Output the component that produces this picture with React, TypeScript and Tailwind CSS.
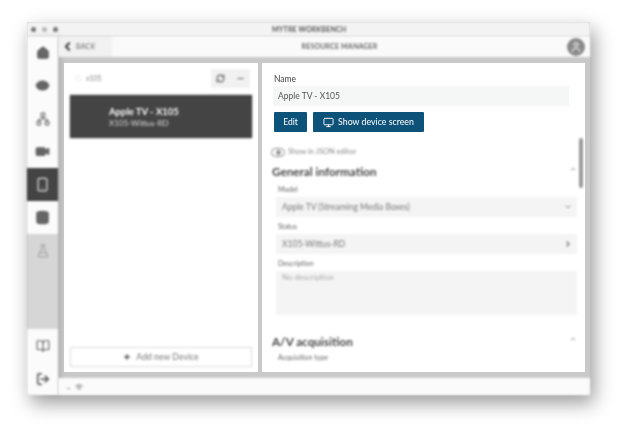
import { Home, Eye, Network, Video, Smartphone, Database, FlaskConical, BookOpen, LogOut, ChevronLeft, ChevronDown, ChevronUp, ChevronRight, RefreshCw, Minus, Plus, Monitor, Search, Wifi, User } from "lucide-react";
import type { ReactNode } from "react";

function NavItem({ children, active, muted }: { children: ReactNode; active?: boolean; muted?: boolean }) {
  return (
    <div
      className={
        "flex h-[33px] items-center justify-center " +
        (active ? "bg-[#444444] text-[#dddddd]" : muted ? "text-[#a5a5a5]" : "bg-[#fbfbfb] text-[#666666]")
      }
    >
      {children}
    </div>
  );
}

function Field({ label, value, chevron }: { label: string; value: string; chevron: ReactNode }) {
  return (
    <div className="mt-[3px] blur-[1px]">
      <p className="pl-[2px] text-[7px] leading-[13px] text-[#666666]">{label}</p>
      <div className="mt-[1px] flex h-[20px] items-center justify-between bg-[#f4f4f4] pl-[6px] pr-[5px] text-[8.5px] text-[#777777]">
        <span>{value}</span>
        {chevron}
      </div>
    </div>
  );
}

export default function App() {
  return (
    <div className="h-[424px] w-[623px] overflow-hidden bg-white pl-[27px] pt-[22px] font-['Lato',sans-serif]">
      <div className="flex h-[373px] w-[563px] flex-col bg-[#c9c9c9] shadow-[4px_8px_18px_rgba(0,0,0,0.4)]">
        <div className="relative flex h-[14px] shrink-0 items-center bg-[#f3f3f3] pl-[4px] blur-[1px]">
          <div className="flex gap-[6px]">
            <span className="h-[5px] w-[5px] rounded-full bg-[#777777]" />
            <span className="h-[5px] w-[5px] rounded-full bg-[#b5b5b5]" />
            <span className="h-[5px] w-[5px] rounded-full bg-[#777777]" />
          </div>
          <span className="ml-[214px] text-[7px] font-bold tracking-wide text-[#555555]">MYTRE WORKBENCH</span>
        </div>
        <div className="flex min-h-0 flex-1">
          <aside className="flex w-[31px] shrink-0 flex-col bg-[#d6d6d6] shadow-[3px_0_4px_rgba(0,0,0,0.12)] blur-[1.3px]">
            <NavItem><Home size={14} fill="currentColor" /></NavItem>
            <NavItem><Eye size={15} fill="currentColor" /></NavItem>
            <NavItem><Network size={14} /></NavItem>
            <NavItem><Video size={15} fill="currentColor" /></NavItem>
            <NavItem active><Smartphone size={15} /></NavItem>
            <NavItem><Database size={15} fill="currentColor" /></NavItem>
            <NavItem muted><FlaskConical size={14} /></NavItem>
            <div className="flex-1" />
            <NavItem><BookOpen size={14} /></NavItem>
            <NavItem><LogOut size={14} strokeWidth={3} /></NavItem>
          </aside>
          <div className="flex min-w-0 flex-1 flex-col">
            <header className="flex h-[21px] shrink-0 items-center justify-between bg-[#fafafa] blur-[1px]">
              <div className="flex h-full w-[54px] items-center bg-[#f1f1f1] pl-[3px]">
                <ChevronLeft size={13} strokeWidth={4} className="text-[#444444]" />
                <span className="ml-[2px] text-[7px] font-bold tracking-wide text-[#888888]">BACK</span>
              </div>
              <span className="text-[7px] font-bold tracking-wide text-[#666666]">RESOURCE MANAGER</span>
              <div className="mr-[5px] flex h-[18px] w-[18px] items-center justify-center rounded-full bg-[#8a8a8a]">
                <User size={12} className="text-white" />
              </div>
            </header>
            <div className="flex min-h-0 flex-1 gap-[4px] pl-[6px] pr-[5px] pt-[6px]">
              <section className="flex w-[194px] shrink-0 flex-col bg-white px-[6px] pb-[5px] pt-[6px]">
                <div className="flex h-[19px] shrink-0 items-center justify-between blur-[1px]">
                  <div className="flex items-center gap-[4px] pl-[5px] text-[7px] text-[#888888]">
                    <Search size={7} className="text-[#e2e2e2]" />
                    <span>x105</span>
                  </div>
                  <div className="mr-[2px] flex h-[19px] w-[39px] items-center justify-around bg-[#f1f1f1] text-[#666666]">
                    <RefreshCw size={9} strokeWidth={3} />
                    <Minus size={9} strokeWidth={3} />
                  </div>
                </div>
                <div className="mt-[7px] flex h-[43px] flex-col justify-center bg-[#444444] pl-[39px] text-white shadow-[0_0_2px_rgba(0,0,0,0.4)] blur-[1px]">
                  <p className="text-[9.5px] font-bold leading-[13px]">Apple TV - X105</p>
                  <p className="text-[8px] leading-[10px] text-[#dddddd]">X105-Wittus-RD</p>
                </div>
                <div className="flex-1" />
                <button type="button" className="flex h-[20px] items-center justify-center gap-[5px] border border-[#dddddd] bg-white text-[8.7px] text-[#777777] blur-[1px]">
                  <Plus size={8} strokeWidth={4} className="text-[#555555]" />
                  Add new Device
                </button>
              </section>
              <section className="relative min-w-0 flex-1 overflow-hidden bg-white pl-[9px] pr-[7px] pt-[10px]">
                <div className="blur-[0.4px]">
                  <p className="pl-[3px] text-[8.5px] leading-[13px] text-[#444444]">Name</p>
                  <div className="ml-[2px] mr-[9px] flex h-[20px] items-center bg-[#f5f6f6] pl-[5px] text-[8.5px] text-[#555555]">Apple TV - X105</div>
                  <div className="ml-[3px] mt-[6px] flex gap-[6px]">
                    <button type="button" className="h-[20px] w-[33px] rounded-[1px] bg-[#0d5278] text-[8.5px] text-white">Edit</button>
                    <button type="button" className="flex h-[20px] w-[111px] items-center justify-center gap-[4px] rounded-[1px] bg-[#0d5278] text-[8.8px] text-white">
                      <Monitor size={11} />
                      Show device screen
                    </button>
                  </div>
                </div>
                <div className="mt-[12px] flex h-[16px] items-center gap-[3px] blur-[1px]">
                  <span className="flex h-[9px] w-[14px] items-center rounded-full border border-[#888888] pl-[4px]">
                    <span className="h-[5px] w-[5px] rounded-full bg-[#999999]" />
                  </span>
                  <span className="text-[7.5px] text-[#888888]">Show in JSON editor</span>
                </div>
                <div className="mt-[3px] flex items-center justify-between pl-[1px] pr-[1px] blur-[1px]">
                  <h3 className="text-[11.7px] font-bold leading-[16px] text-[#444444]">General information</h3>
                  <ChevronUp size={8} strokeWidth={3} className="-mt-[4px] text-[#999999]" />
                </div>
                <div className="ml-[5px] mr-[1px] pt-[1px]">
                  <Field label="Model" value="Apple TV (Streaming Media Boxes)" chevron={<ChevronDown size={8} strokeWidth={3} className="text-[#888888]" />} />
                  <Field label="Status" value="X105-Wittus-RD" chevron={<ChevronRight size={8} strokeWidth={4} className="text-[#777777]" />} />
                  <div className="mt-[3px] blur-[1px]">
                    <p className="pl-[2px] text-[7px] leading-[13px] text-[#666666]">Description</p>
                    <div className="mt-[1px] h-[44px] bg-[#f4f4f4] pl-[6px] text-[8px] leading-[12px] text-[#aaaaaa]">No description</div>
                  </div>
                </div>
                <div className="mt-[18px] flex items-center justify-between pl-[1px] pr-[1px] blur-[1px]">
                  <h3 className="text-[11.7px] font-bold leading-[16px] text-[#444444]">A/V acquisition</h3>
                  <ChevronUp size={8} strokeWidth={3} className="-mt-[4px] text-[#999999]" />
                </div>
                <p className="mt-[3px] pl-[7px] text-[7px] leading-[10px] text-[#666666] blur-[1px]">Acquisition type</p>
                <div className="absolute right-[2px] top-[75px] h-[50px] w-[4px] rounded-full bg-[#999999] blur-[1px]" />
              </section>
            </div>
            <footer className="mt-[6px] flex h-[17px] shrink-0 items-center gap-[5px] bg-[#fbfbfb] pl-[9px] text-[#888888] blur-[1px]">
              <span className="mt-[4px] h-[1px] w-[3px] bg-[#999999]" />
              <Wifi size={8} strokeWidth={3} />
            </footer>
          </div>
        </div>
      </div>
    </div>
  );
}
